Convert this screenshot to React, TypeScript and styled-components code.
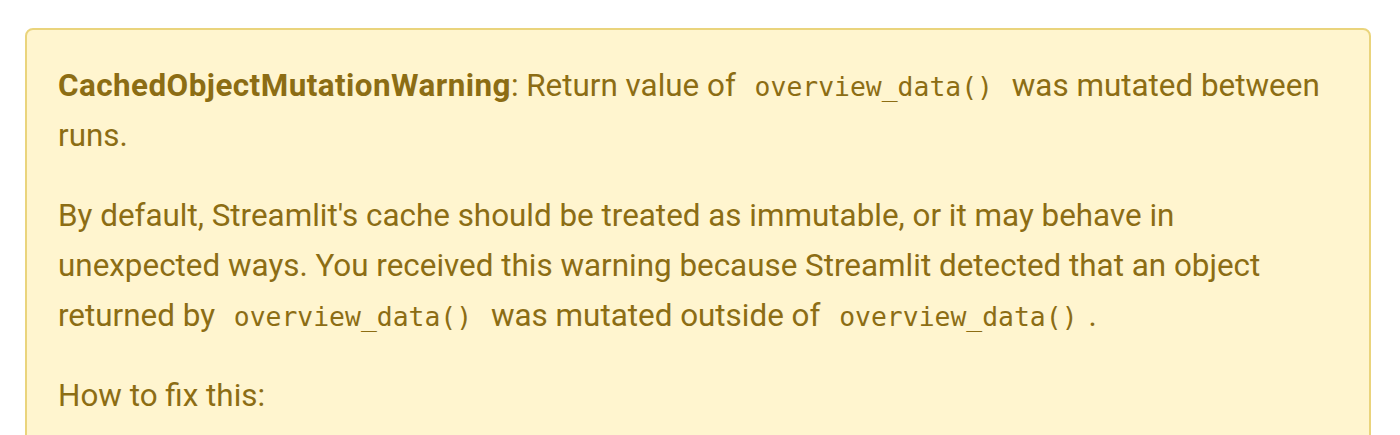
import React from "react";
import styled, { createGlobalStyle } from "styled-components";

const Global = createGlobalStyle`
  html, body { margin: 0; padding: 0; background: #ffffff; }
  body { font-family: Roboto, "Noto Sans", sans-serif; }
`;

const Page = styled.div`
  padding: 28px 29px 0 25px;
`;

const Alert = styled.div`
  background: #fff5cf;
  border: 2px solid #ead47c;
  border-radius: 8px;
  padding: 31px 31px 20px 31px;
  color: #8c6d14;
  font-family: Roboto, "Noto Sans", sans-serif;
  font-size: 31.4px;
  line-height: 50px;
  height: 430px;
  box-sizing: border-box;
`;

const Para = styled.p`
  margin: 0 0 30px 0;
`;

const Strong = styled.strong`
  font-weight: 700;
  letter-spacing: 0.45px;
`;

const Code = styled.code`
  font-family: "DejaVu Sans Mono", "Liberation Mono", monospace;
  font-size: 26.4px;
  line-height: 1;
  padding: 0 11px;
  background: transparent;
`;

export default function App() {
  return (
    <>
      <Global />
      <Page>
        <Alert>
          <Para>
            <Strong>CachedObjectMutationWarning</Strong>: Return value of <Code>overview_data()</Code> was mutated between
            <br />
            runs.
          </Para>
          <Para>
            By default, Streamlit's cache should be treated as immutable, or it may behave in
            <br />
            unexpected ways. You received this warning because Streamlit detected that an object
            <br />
            returned by <Code>overview_data()</Code> was mutated outside of <Code>overview_data()</Code>.
          </Para>
          <Para>How to fix this:</Para>
        </Alert>
      </Page>
    </>
  );
}
